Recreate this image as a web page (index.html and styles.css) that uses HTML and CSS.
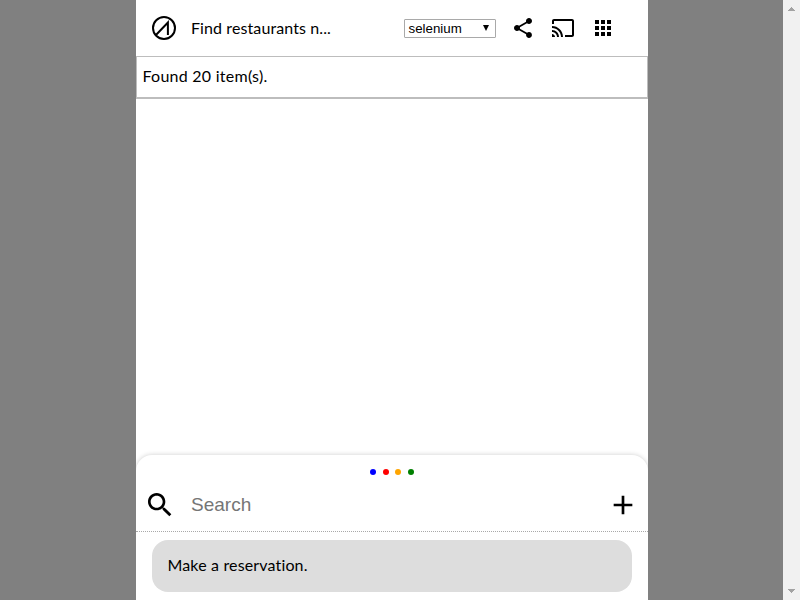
FILE: index.html
```html
<!DOCTYPE html>
<html lang="en">
<head>
<meta charset="utf-8">
<title>Find restaurants</title>
<link rel="stylesheet" href="styles.css">
</head>
<body>
<div class="backdrop">
  <main class="app">
    <header class="header">
      <svg class="logo" viewBox="0 0 24 24"><circle cx="12" cy="12" r="11"/><path d="M3.7 19.2 15.9 6.5V19"/></svg>
      <span class="title">Find restaurants n...</span>
      <div class="select"><span>selenium</span><svg viewBox="0 0 6 6"><path d="M0 0h6L3 6z"/></svg></div>
      <nav class="actions">
        <svg class="icon" viewBox="0 0 24 24"><path d="M18 16.08c-.76 0-1.44.3-1.96.77L8.91 12.7c.05-.23.09-.46.09-.7s-.04-.47-.09-.7l7.05-4.11c.54.5 1.25.81 2.04.81 1.66 0 3-1.34 3-3s-1.34-3-3-3-3 1.34-3 3c0 .24.04.47.09.7L8.04 9.81C7.5 9.31 6.79 9 6 9c-1.66 0-3 1.34-3 3s1.34 3 3 3c.79 0 1.5-.31 2.04-.81l7.12 4.16c-.05.21-.08.43-.08.65 0 1.61 1.31 2.92 2.92 2.92s2.92-1.31 2.92-2.92-1.31-2.92-2.92-2.92z"/></svg>
        <svg class="icon" viewBox="0 0 24 24"><path d="M21 3H3c-1.1 0-2 .9-2 2v3h2V5h18v14h-7v2h7c1.1 0 2-.9 2-2V5c0-1.1-.9-2-2-2zM1 18v3h3c0-1.66-1.34-3-3-3zm0-4v2c2.76 0 5 2.24 5 5h2c0-3.87-3.13-7-7-7zm0-4v2c4.97 0 9 4.03 9 9h2c0-6.08-4.93-11-11-11z"/></svg>
        <svg class="icon" viewBox="0 0 24 24"><path d="M4 8h4V4H4v4zm6 12h4v-4h-4v4zm-6 0h4v-4H4v4zm0-6h4v-4H4v4zm6 0h4v-4h-4v4zm6-10v4h4V4h-4zm-6 4h4V4h-4v4zm6 6h4v-4h-4v4zm0 6h4v-4h-4v4z"/></svg>
      </nav>
    </header>
    <section class="result"><span class="found">Found 20 item(s).</span></section>
    <section class="panel">
      <div class="dots"><i class="blue"></i><i class="red"></i><i class="orange"></i><i class="green"></i></div>
      <div class="search">
        <svg class="big" viewBox="0 0 24 24"><path d="M15.5 14h-.79l-.28-.27C15.41 12.59 16 11.11 16 9.5 16 5.91 13.09 3 9.5 3S3 5.91 3 9.5 5.91 16 9.5 16c1.61 0 3.09-.59 4.23-1.57l.27.28v.79l5 4.99L20.49 19l-4.99-5zm-6 0C7.01 14 5 11.99 5 9.5S7.01 5 9.5 5 14 7.01 14 9.5 11.99 14 9.5 14z"/></svg>
        <span class="placeholder">Search</span>
        <svg class="big" viewBox="0 0 24 24"><path d="M19 13h-6v6h-2v-6H5v-2h6V5h2v6h6v2z"/></svg>
      </div>
      <div class="suggestion"><span class="suggest-text">Make a reservation.</span></div>
    </section>
  </main>
</div>
<aside class="scrollbar">
  <svg viewBox="0 0 7 4"><path d="M3 0h1v1h1v1h1v1h1v1H0V3h1V2h1V1h1z"/></svg>
  <svg viewBox="0 0 7 4"><path d="M0 0h7v1H6v1H5v1H4v1H3V3H2V2H1V1H0z"/></svg>
</aside>
</body>
</html>
```
FILE: styles.css
```css
* { box-sizing: border-box; }
body {
  margin: 0;
  height: 600px;
  display: flex;
  overflow: hidden;
  font: 16px/20px Lato, sans-serif;
  color: #000;
}
svg { display: block; flex: none; }
.backdrop {
  width: 783px;
  padding-left: 136px;
  background: #808080;
}
.app {
  width: 512px;
  height: 600px;
  display: flex;
  flex-direction: column;
  background: #fff;
  overflow: hidden;
}
.header {
  height: 56px;
  flex: none;
  display: flex;
  align-items: center;
  padding-left: 16px;
}
.logo {
  width: 24px;
  height: 24px;
  fill: none;
  stroke: #000;
  stroke-width: 2;
}
.title {
  width: 213px;
  margin-left: 15px;
  letter-spacing: 0.1px;
  white-space: nowrap;
}
.select {
  width: 92px;
  height: 19px;
  display: flex;
  align-items: center;
  justify-content: space-between;
  padding: 0 6px 0 3.5px;
  border: 1px solid #a9a9a9;
  border-radius: 1px;
  font: 13.33px/17px "Liberation Sans", sans-serif;
}
.select svg { width: 6px; height: 6px; }
.actions { display: flex; gap: 16px; margin-left: 15px; }
.icon { width: 24px; height: 24px; }
.result {
  height: 43px;
  flex: none;
  padding: 9px 5.5px;
  border: 1px solid #bdbdbd;
  border-bottom-width: 2px;
}
.found { letter-spacing: 0.25px; }
.panel {
  height: 145px;
  margin-top: auto;
  border-radius: 16px 16px 0 0;
  background: #fff;
  box-shadow: 0 0 5px rgba(0, 0, 0, 0.2);
}
.dots {
  height: 34px;
  display: flex;
  justify-content: center;
  align-items: center;
  gap: 6.7px;
}
.dots i { width: 6px; height: 6px; border-radius: 50%; }
.blue { background: blue; }
.red { background: red; }
.orange { background: orange; }
.green { background: green; }
.search {
  height: 43px;
  display: flex;
  padding: 0 9px 0 7.5px;
  border-bottom: 1px dotted #a9a9a9;
}
.big { width: 32px; height: 32px; }
.placeholder {
  flex: 1;
  margin-left: 15.5px;
  font: 19px/32px "Liberation Sans", sans-serif;
  color: #757575;
}
.suggestion {
  height: 52px;
  margin: 8px 16px 0;
  padding: 15px 15.5px;
  border-radius: 16px;
  background: #ddd;
}
.suggest-text { letter-spacing: 0.15px; }
.scrollbar {
  width: 17px;
  height: 600px;
  display: flex;
  flex-direction: column;
  justify-content: space-between;
  align-items: center;
  padding: 7px 0;
  background: #f1f1f1;
  fill: #a3a3a3;
}
.scrollbar svg { width: 7px; height: 4px; }
```
